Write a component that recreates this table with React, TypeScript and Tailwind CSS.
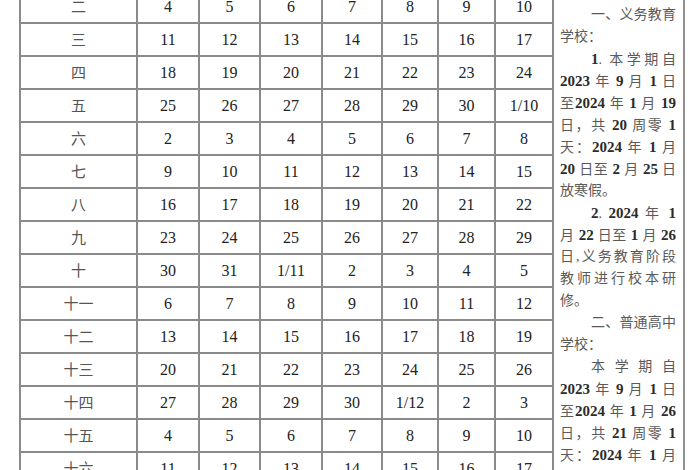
import React from "react";

const rows: [string, string[]][] = [
  ["二", ["4", "5", "6", "7", "8", "9", "10"]],
  ["三", ["11", "12", "13", "14", "15", "16", "17"]],
  ["四", ["18", "19", "20", "21", "22", "23", "24"]],
  ["五", ["25", "26", "27", "28", "29", "30", "1/10"]],
  ["六", ["2", "3", "4", "5", "6", "7", "8"]],
  ["七", ["9", "10", "11", "12", "13", "14", "15"]],
  ["八", ["16", "17", "18", "19", "20", "21", "22"]],
  ["九", ["23", "24", "25", "26", "27", "28", "29"]],
  ["十", ["30", "31", "1/11", "2", "3", "4", "5"]],
  ["十一", ["6", "7", "8", "9", "10", "11", "12"]],
  ["十二", ["13", "14", "15", "16", "17", "18", "19"]],
  ["十三", ["20", "21", "22", "23", "24", "25", "26"]],
  ["十四", ["27", "28", "29", "30", "1/12", "2", "3"]],
  ["十五", ["4", "5", "6", "7", "8", "9", "10"]],
  ["十六", ["11", "12", "13", "14", "15", "16", "17"]],
];

type Line = { t: string; indent?: boolean; left?: boolean };

const lines: Line[] = [
  { t: "一、义务教育", indent: true },
  { t: "学校：", left: true },
  { t: "1. 本学期自", indent: true },
  { t: "2023 年 9 月 1 日" },
  { t: "至2024 年 1 月 19" },
  { t: "日，共 20 周零 1" },
  { t: "天：2024 年 1 月" },
  { t: "20 日至 2 月 25 日" },
  { t: "放寒假。", left: true },
  { t: "2. 2024 年 1", indent: true },
  { t: "月 22 日至 1 月 26" },
  { t: "日,义务教育阶段" },
  { t: "教师进行校本研" },
  { t: "修。", left: true },
  { t: "二、普通高中", indent: true },
  { t: "学校：", left: true },
  { t: "本学期自", indent: true },
  { t: "2023 年 9 月 1 日" },
  { t: "至2024 年 1 月 26" },
  { t: "日，共 21 周零 1" },
  { t: "天：2024 年 1 月" },
];

function Rich({ text }: { text: string }) {
  const parts = text.split(/(\d+)/);
  return (
    <>
      {parts.map((p, i) =>
        /^\d+$/.test(p) ? (
          <span key={i} className="font-bold text-[15px] text-[#2b2b2b]">
            {p}
          </span>
        ) : (
          <span key={i}>{p}</span>
        )
      )}
    </>
  );
}

export default function App() {
  return (
    <div className="w-[700px] h-[470px] overflow-hidden bg-white">
      <div className="flex mt-[-9px] ml-[19px]">
        <div className="shrink-0 grid grid-cols-[117px_62px_61px_62px_60px_56px_57px_58px] border-l-2 border-[#8a8a8a]">
          {rows.map(([label, cells]) => (
            <React.Fragment key={label}>
              <div className="h-[33px] border-b-2 border-r-2 border-[#8a8a8a] flex items-center justify-center text-[15px] text-[#555] [font-family:'Noto_Sans_CJK_SC',sans-serif]">
                {label}
              </div>
              {cells.map((c, i) => (
                <div
                  key={i}
                  className="h-[33px] border-b-2 border-r-2 border-[#8a8a8a] flex items-center justify-center text-[16px] text-[#222] [font-family:'Liberation_Serif',serif]"
                >
                  {c}
                </div>
              ))}
            </React.Fragment>
          ))}
        </div>
        <div className="shrink-0 w-[131px] max-w-[131px] min-w-0 overflow-hidden border-r-2 border-[#8f8f8f] pl-[6px] pr-[7px] pt-[13px] text-[14px] leading-[22px] text-[#5a5a5a] [font-family:'Liberation_Serif','Noto_Sans_CJK_SC',serif]">
          {lines.map((l, i) => (
            <div
              key={i}
              className={
                l.left
                  ? "h-[22px] whitespace-nowrap text-left"
                  : l.indent
                  ? "h-[22px] whitespace-nowrap pl-[31px] text-justify [text-align-last:justify]"
                  : "h-[22px] whitespace-nowrap text-justify [text-align-last:justify]"
              }
            >
              <Rich text={l.t} />
            </div>
          ))}
        </div>
      </div>
    </div>
  );
}
